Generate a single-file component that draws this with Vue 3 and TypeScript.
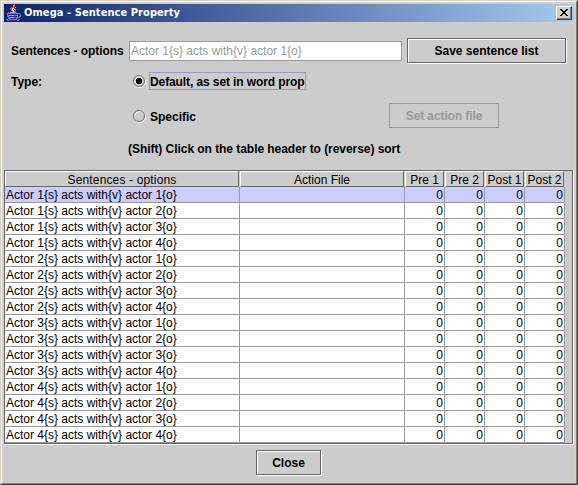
<script setup lang="ts">
import { ref } from 'vue'

interface SentenceRow {
  sentence: string
  action: string
  counts: number[]
}

const mode = ref<'default' | 'specific'>('default')
const selected = ref(0)
const headers: string[] = ['Sentences - options', 'Action File', 'Pre 1', 'Pre 2', 'Post 1', 'Post 2']

const rows: SentenceRow[] = []
for (let a = 1; a <= 4; a++) {
  for (let b = 1; b <= 4; b++) {
    rows.push({ sentence: `Actor ${a}{s} acts with{v} actor ${b}{o}`, action: '', counts: [0, 0, 0, 0] })
  }
}
</script>

<template>
  <div class="window">
    <div class="frame">
      <header class="titlebar">
        <svg class="cup" width="16" height="18" viewBox="0 0 16 18" shape-rendering="crispEdges">
          <path d="M8 0h1v3h-1zM7 2h1v2h-1zM5 3h2v1h-2zM4 4h2v2h-2zM5 6h1v1h-1zM6 7h1v1h-1zM8 4h1v1h-1zM9 5h1v2h-1zM8 7h1v1h-1z" fill="#d8503c" />
          <path d="M7 1h1v1h-1zM6 4h2v1h-2zM6 5h1v2h-1zM7 6h1v2h-1zM8 5h1v1h-1zM9 3h1v1h-1z" fill="#f0b0a0" />
          <path d="M1 9h13v1h1v3h-1v1h-2v1h-1v1h-8v-1h-1v-2h-1z" fill="#7070c8" />
          <path d="M2 8h9v1h-9z" fill="#5050a8" />
          <path d="M4 8h6v1h-6z" fill="#b0a8d8" />
          <path d="M2 10h9v1h-9zM3 12h8v1h-8zM4 14h6v1h-6z" fill="#282880" />
          <path d="M12 10h2v2h-1v1h-1z" fill="#132c70" />
          <path d="M3 11h5v1h-5zM4 13h4v1h-4z" fill="#a8a8ec" />
          <path d="M0 15h2v1h10v-1h2v1h-1v1h-12v-1h-1z" fill="#7070c8" />
          <path d="M3 16h8v1h-8z" fill="#34348c" />
        </svg>
        <span class="title">Omega - Sentence Property</span>
        <button class="x" aria-label="Close window">
          <svg width="8" height="7" viewBox="0 0 8 7" shape-rendering="crispEdges">
            <path d="M0 0h2v1h1v1h2v-1h1v-1h2v1h-1v1h-1v1h-1v1h1v1h1v1h1v1h-2v-1h-1v-1h-2v1h-1v1h-2v-1h1v-1h1v-1h1v-1h-1v-1h-1v-1h-1z" />
          </svg>
        </button>
      </header>

      <section class="row sentence-row">
        <span class="label name">Sentences - options</span>
        <div class="field"><span>Actor 1{s} acts with{v} actor 1{o}</span></div>
        <button class="btn save"><span>Save sentence list</span></button>
      </section>

      <section class="row type-row">
        <span class="label type">Type:</span>
        <div class="radio" @click="mode = 'default'">
          <svg width="13" height="13" viewBox="0 0 13 13">
            <circle cx="7" cy="7" r="5.5" fill="none" stroke="#fff" />
            <circle cx="6" cy="6" r="5.5" fill="none" stroke="#666" />
            <path v-if="mode === 'default'" d="M4 3h4v1h1v4h-1v1h-4v-1h-1v-4h1z" shape-rendering="crispEdges" />
          </svg>
          <span class="choice" :class="{ focus: mode === 'default' }">Default, as set in word prop</span>
        </div>
      </section>

      <section class="row specific-row">
        <div class="radio" @click="mode = 'specific'">
          <svg width="13" height="13" viewBox="0 0 13 13">
            <circle cx="7" cy="7" r="5.5" fill="none" stroke="#fff" />
            <circle cx="6" cy="6" r="5.5" fill="none" stroke="#666" />
            <path v-if="mode === 'specific'" d="M4 3h4v1h1v4h-1v1h-4v-1h-1v-4h1z" shape-rendering="crispEdges" />
          </svg>
          <span class="choice">Specific</span>
        </div>
        <button class="btn action" disabled><span>Set action file</span></button>
      </section>

      <p class="hint"><span>(Shift) Click on the table header to (reverse) sort</span></p>

      <div class="pane">
        <div class="grid head">
          <div v-for="h in headers" :key="h" class="th"><span>{{ h }}</span></div>
        </div>
        <div v-for="(r, i) in rows" :key="i" class="grid line" :class="{ selected: selected === i }" @click="selected = i">
          <div class="td text"><span>{{ r.sentence }}</span></div>
          <div class="td">{{ r.action }}</div>
          <div v-for="(c, j) in r.counts" :key="j" class="td num">{{ c }}</div>
        </div>
      </div>

      <footer class="foot"><button class="btn close"><span>Close</span></button></footer>
    </div>
  </div>
</template>

<style>
body { margin: 0; overflow: hidden; }
</style>

<style scoped>
* { box-sizing: border-box; }
.window {
  width: 578px;
  height: 485px;
  border: 1px solid;
  border-color: #d4d0c8 #404040 #404040 #d4d0c8;
  font: 12px/16px "Liberation Sans", Arial, sans-serif;
  color: #000;
  white-space: nowrap;
}
.frame {
  width: 576px;
  height: 483px;
  padding: 2px;
  border: 1px solid;
  border-color: #fff #808080 #808080 #fff;
  background: linear-gradient(#ccc, #ccc) content-box, #d4d0c8;
}
.titlebar {
  display: flex;
  align-items: center;
  height: 18px;
  padding: 0 2px;
  background: linear-gradient(90deg, #0a246a, #a6caf0);
}
.title {
  flex: 1;
  margin-left: 2px;
  color: #fff;
  font: bold 11px/18px "DejaVu Sans Condensed", "DejaVu Sans", sans-serif;
  letter-spacing: 0.07px;
}
.x {
  display: flex;
  align-items: center;
  justify-content: center;
  width: 16px;
  height: 14px;
  padding: 0 1px 1px 0;
  border: 1px solid;
  border-color: #fff #404040 #404040 #fff;
  box-shadow: inset -1px -1px #808080;
  background: #d4d0c8;
}
.row { display: flex; }
.label, .choice, .hint, .btn { font-weight: bold; }
.sentence-row { padding: 16px 0 0 7px; height: 50px; }
.name { width: 118px; padding-top: 5px; letter-spacing: -0.08px; }
.field {
  width: 273px;
  height: 20px;
  margin: 3px 5px 0 0;
  padding-left: 1px;
  border: 1px solid #999;
  background: #fff;
  color: #999;
  line-height: 19px;
}
.btn {
  height: 25px;
  padding: 1px 0 0;
  border: 1px solid #666;
  border-radius: 0;
  box-shadow: inset 1px 1px #fff, 1px 1px #fff;
  background: #ccc;
  font-family: inherit;
  font-size: 12px;
  line-height: 22px;
  color: #000;
}
.btn:disabled { color: #999; border-color: #999; box-shadow: none; }
.save { width: 159px; }
.type-row { height: 31px; padding-left: 7px; }
.type { width: 122px; padding-top: 2px; }
.radio { display: flex; }
.radio svg { margin: 3px 3px 0 0; }
.choice { height: 18px; border: 1px solid transparent; line-height: 18px; }
.choice.focus { width: 157px; border-color: #99c; letter-spacing: -0.1px; }
.specific-row { height: 35px; padding-left: 129px; }
.specific-row .radio { width: 256px; padding-top: 4px; }
.action { width: 110px; }
.action span { letter-spacing: -0.1px; }
.hint { margin: 0; padding: 3px 0 0 124px; height: 32px; letter-spacing: -0.05px; }
.pane {
  width: 569px;
  height: 274px;
  border: 1px solid #666;
  box-shadow: 0 1px #fff, 1px 1px #fff;
}
.grid { display: grid; grid-template-columns: 235px 165px repeat(4, 40px); height: 16px; }
.th {
  height: 16px;
  margin-right: 1px;
  border: 1px solid;
  border-color: #fff #666 #666 #fff;
  text-align: center;
  line-height: 16px;
}
.th:first-child { letter-spacing: 0.15px; }
.td {
  height: 16px;
  border: solid #999;
  border-width: 0 1px 1px 0;
  background: #fff;
  padding: 0 1px;
}
.selected .td { background: #ccf; }
.num { text-align: right; }
.foot { display: flex; justify-content: center; padding: 6px 1px 0 0; }
.close { width: 65px; }
</style>
